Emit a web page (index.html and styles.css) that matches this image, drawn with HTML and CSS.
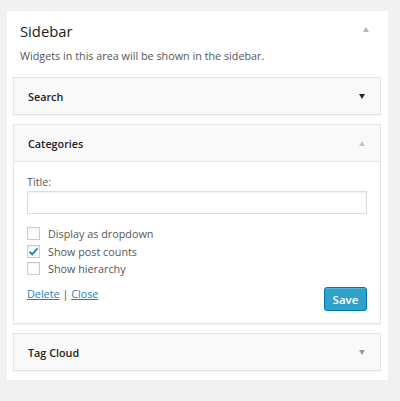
FILE: index.html
```html
<!DOCTYPE html>
<html>
<head>
<meta charset="utf-8">
<link rel="stylesheet" href="styles.css">
</head>
<body>
<div class="sidebar">
  <div class="sidebar-head">
    <h2 class="sidebar-title">Sidebar</h2>
    <span class="arrow arrow-up light"></span>
  </div>
  <p class="sidebar-desc">Widgets in this area will be shown in the sidebar.</p>

  <div class="widget">
    <div class="widget-top">
      <span class="widget-name">Search</span>
      <span class="arrow arrow-down dark"></span>
    </div>
  </div>

  <div class="widget">
    <div class="widget-top open">
      <span class="widget-name">Categories</span>
      <span class="arrow arrow-up faint"></span>
    </div>
    <div class="widget-body">
      <label class="field-label">Title:</label>
      <input class="text-input" type="text">
      <div class="checks">
        <label class="check"><span class="box"></span>Display as dropdown</label>
        <label class="check"><span class="box checked"><svg width="11" height="9" viewBox="0 0 11 9"><path d="M1.5 4.8 L4.2 7.3 L9.5 1.3" fill="none" stroke="#1e8cbe" stroke-width="2"/></svg></span>Show post counts</label>
        <label class="check"><span class="box"></span>Show hierarchy</label>
      </div>
      <div class="actions">
        <div class="links"><a href="#">Delete</a> | <a href="#">Close</a></div>
        <button class="save">Save</button>
      </div>
    </div>
  </div>

  <div class="widget">
    <div class="widget-top">
      <span class="widget-name">Tag Cloud</span>
      <span class="arrow arrow-down mid"></span>
    </div>
  </div>
</div>
</body>
</html>
```

FILE: styles.css
```css
html, body {
  margin: 0;
  padding: 0;
  background: #f1f1f1;
  font-family: "Open Sans", "Liberation Sans", sans-serif;
  color: #444;
}

.sidebar {
  margin: 11px 0 0 7px;
  width: 381px;
  box-sizing: border-box;
  background: #fff;
  padding: 0 7px 9px 6px;
  box-shadow: 0 1px 1px rgba(0,0,0,0.04);
}

.sidebar-head {
  display: flex;
  align-items: center;
  justify-content: space-between;
  padding: 10px 12px 0 7px;
}

.sidebar-title {
  margin: 0;
  font-size: 14.8px;
  font-weight: 400;
  color: #222;
  line-height: 20px;
}

.sidebar-head .arrow { margin-top: -4px; }

.sidebar-desc {
  margin: 0;
  padding: 7px 0 13px 7px;
  font-size: 10.8px;
  color: #555;
  line-height: 16px;
}

.arrow {
  width: 0;
  height: 0;
  border-left: 3.5px solid transparent;
  border-right: 3.5px solid transparent;
}
.arrow-up { border-bottom: 5px solid #aaa; }
.arrow-down { border-top: 5px solid #333; }
.arrow-up.light { border-bottom-color: #b4b4b4; }
.arrow-up.faint { border-bottom-color: #c4c4c4; }
.arrow-down.dark { border-top-color: #23282d; }
.arrow-down.mid { border-top-color: #999; }

.widget {
  border: 1px solid #e5e5e5;
  background: #fff;
  margin-top: 9px;
  box-shadow: 0 1px 1px rgba(0,0,0,0.04);
}
.sidebar-desc + .widget { margin-top: 0; }

.widget-top {
  background: #f9f9f9;
  height: 36px;
  display: flex;
  align-items: center;
  justify-content: space-between;
  padding: 0 15px 0 14px;
}
.widget-top.open { border-bottom: 1px solid #e5e5e5; }

.widget-name {
  font-size: 10.8px;
  font-weight: 600;
  color: #222;
}

.widget-body {
  padding: 12px 13px 12px 13px;
  display: flex;
  flex-direction: column;
}

.field-label {
  font-size: 10.8px;
  color: #555;
  line-height: 16px;
}

.text-input {
  margin-top: 1px;
  height: 23px;
  box-sizing: border-box;
  border: 1px solid #ddd;
  box-shadow: inset 0 1px 2px rgba(0,0,0,0.07);
  width: 100%;
  padding: 0;
}

.checks {
  margin-top: 13px;
  display: flex;
  flex-direction: column;
  gap: 4.5px;
}

.check {
  display: flex;
  align-items: center;
  font-size: 10.8px;
  color: #555;
  line-height: 13px;
  height: 13px;
}

.box {
  width: 13px;
  height: 13px;
  box-sizing: border-box;
  border: 1px solid #ccc;
  background: #fff;
  margin-right: 8px;
  display: flex;
  align-items: center;
  justify-content: center;
  box-shadow: inset 0 1px 2px rgba(0,0,0,0.07);
}

.actions {
  margin-top: 12px;
  display: flex;
  justify-content: space-between;
  align-items: flex-start;
}

.links {
  font-size: 10.8px;
  color: #555;
  line-height: 14px;
}
.links a {
  color: #2183b5;
  text-decoration: underline;
}

.save {
  height: 24px;
  width: 43px;
  background: #2ea2cc;
  border: 1px solid #0074a2;
  border-radius: 3px;
  color: #fff;
  font-family: "Open Sans", "Liberation Sans", sans-serif;
  font-size: 11.5px;
  font-weight: 600;
  padding: 0;
  box-shadow: inset 0 1px 0 rgba(120,200,230,0.5);
}
```
